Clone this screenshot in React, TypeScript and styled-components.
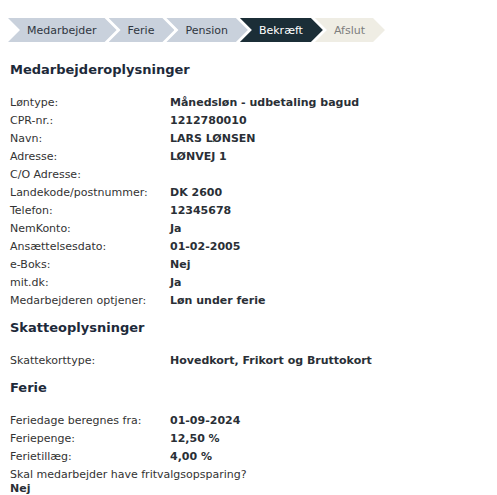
import React from "react";
import styled, { createGlobalStyle } from "styled-components";

const Global = createGlobalStyle`
  html, body { margin: 0; padding: 0; background: #fff; }
  body { font-family: "DejaVu Sans", Verdana, sans-serif; font-size: 11px; color: #333; }
`;

const Page = styled.div`
  padding: 18px 8px 0 8px;
`;

const Steps = styled.nav`
  display: flex;
  height: 24px;
`;

type StepState = "done" | "active" | "todo";

const Step = styled.div<{ $state: StepState }>`
  display: flex;
  align-items: center;
  height: 24px;
  padding: 0 20px 0 19px;
  margin-left: -8px;
  &:first-child { margin-left: 0; }
  clip-path: polygon(0 0, calc(100% - 12px) 0, 100% 50%, calc(100% - 12px) 100%, 0 100%, 12px 50%);
  background: ${(p) => (p.$state === "active" ? "#1b2e37" : p.$state === "done" ? "#c9d1dc" : "#efede4")};
  color: ${(p) => (p.$state === "active" ? "#ffffff" : p.$state === "done" ? "#2f3640" : "#7d7d7d")};
  font-size: 11px;
  white-space: nowrap;
`;

const Section = styled.section`
  padding-left: 2px;
`;

const Heading = styled.h2`
  margin: 0;
  font-size: 13px;
  line-height: 20px;
  font-weight: bold;
  color: #1d2a3a;
`;

const FirstHeading = styled(Heading)`
  margin-top: 18px;
`;

const Rows = styled.div`
  margin: 14px 0 8px 0;
`;

const Row = styled.div`
  display: grid;
  grid-template-columns: 160px 1fr;
  line-height: 18px;
`;

const Label = styled.div`
  color: #333;
`;

const Value = styled.div`
  font-weight: bold;
  color: #2a2f36;
`;

const Question = styled.div`
  line-height: 14px;
  padding-top: 2px;
`;

const medarbejder: [string, string][] = [
  ["Løntype:", "Månedsløn - udbetaling bagud"],
  ["CPR-nr.:", "1212780010"],
  ["Navn:", "LARS LØNSEN"],
  ["Adresse:", "LØNVEJ 1"],
  ["C/O Adresse:", ""],
  ["Landekode/postnummer:", "DK 2600"],
  ["Telefon:", "12345678"],
  ["NemKonto:", "Ja"],
  ["Ansættelsesdato:", "01-02-2005"],
  ["e-Boks:", "Nej"],
  ["mit.dk:", "Ja"],
  ["Medarbejderen optjener:", "Løn under ferie"],
];

const ferie: [string, string][] = [
  ["Feriedage beregnes fra:", "01-09-2024"],
  ["Feriepenge:", "12,50 %"],
  ["Ferietillæg:", "4,00 %"],
];

export default function App() {
  return (
    <Page>
      <Global />
      <Steps>
        <Step $state="done">Medarbejder</Step>
        <Step $state="done">Ferie</Step>
        <Step $state="done">Pension</Step>
        <Step $state="active">Bekræft</Step>
        <Step $state="todo">Afslut</Step>
      </Steps>
      <Section>
        <FirstHeading>Medarbejderoplysninger</FirstHeading>
        <Rows>
          {medarbejder.map(([l, v]) => (
            <Row key={l}>
              <Label>{l}</Label>
              <Value>{v}</Value>
            </Row>
          ))}
        </Rows>
        <Heading>Skatteoplysninger</Heading>
        <Rows>
          <Row>
            <Label>Skattekorttype:</Label>
            <Value>Hovedkort, Frikort og Bruttokort</Value>
          </Row>
        </Rows>
        <Heading>Ferie</Heading>
        <Rows>
          {ferie.map(([l, v]) => (
            <Row key={l}>
              <Label>{l}</Label>
              <Value>{v}</Value>
            </Row>
          ))}
          <Question>
            <Label>Skal medarbejder have fritvalgsopsparing?</Label>
            <Value>Nej</Value>
          </Question>
        </Rows>
      </Section>
    </Page>
  );
}
